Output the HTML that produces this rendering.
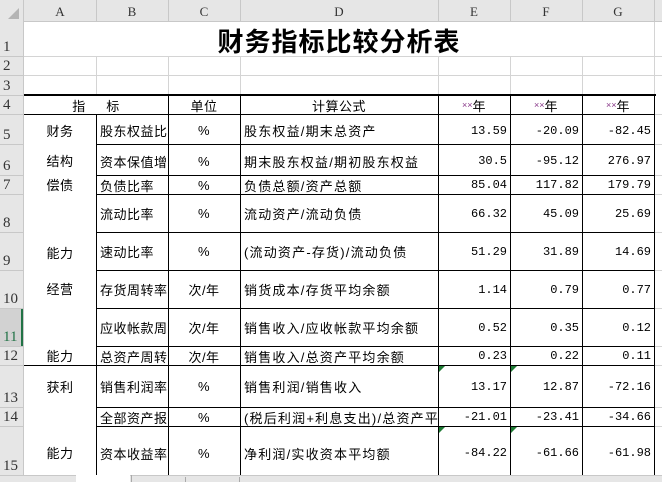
<!DOCTYPE html><html><head><meta charset="utf-8"><style>
body{margin:0;width:662px;height:482px;overflow:hidden;background:#fff;position:relative;font-family:"Liberation Sans","Noto Sans CJK SC",sans-serif;}
.a{position:absolute}
.h{position:absolute;background:#d4d4d4}
.k{position:absolute;background:#000}
.t{position:absolute;font-size:13px;letter-spacing:0.5px;color:#000;white-space:nowrap;overflow:hidden;display:flex;align-items:center}
.c{justify-content:center}
.n{justify-content:flex-end;font-family:"Liberation Mono",monospace;font-size:12px;letter-spacing:0;padding-right:3px;box-sizing:border-box}
.l{padding-left:3px;box-sizing:border-box}
.d{letter-spacing:1.2px}
.ch{position:absolute;top:0;height:22px;line-height:24px;text-align:center;font-family:"Liberation Serif",serif;font-size:13px;color:#333}
.rh{position:absolute;left:0;width:23px;font-family:"Liberation Serif",serif;font-size:15px;color:#333;padding-left:3px;box-sizing:border-box;display:flex;align-items:flex-end}
.g{position:absolute;width:0;height:0;border-top:6px solid #1e7b34;border-right:6px solid transparent}
.x{color:#8a3a8a;font-size:9px;letter-spacing:0}
</style></head><body>
<div class="a" style="left:0;top:0;width:662px;height:22px;background:#e6e6e6;border-bottom:1px solid #c8c8c8;box-sizing:border-box"></div>
<div class="a" style="left:0;top:0;width:24px;height:475px;background:#e6e6e6;border-right:1px solid #c8c8c8;box-sizing:border-box"></div>
<div class="a" style="left:8px;top:8px;width:0;height:0;border-bottom:11px solid #b4b4b4;border-left:11px solid transparent"></div>
<div class="ch" style="left:24px;width:72px">A</div><div class="ch" style="left:96px;width:72px">B</div><div class="ch" style="left:168px;width:72px">C</div><div class="ch" style="left:240px;width:198px">D</div><div class="ch" style="left:438px;width:72px">E</div><div class="ch" style="left:510px;width:72px">F</div><div class="ch" style="left:582px;width:72px">G</div>
<div class="h" style="left:96px;top:0;width:1px;height:22px;background:#c8c8c8"></div><div class="h" style="left:168px;top:0;width:1px;height:22px;background:#c8c8c8"></div><div class="h" style="left:240px;top:0;width:1px;height:22px;background:#c8c8c8"></div><div class="h" style="left:438px;top:0;width:1px;height:22px;background:#c8c8c8"></div><div class="h" style="left:510px;top:0;width:1px;height:22px;background:#c8c8c8"></div><div class="h" style="left:582px;top:0;width:1px;height:22px;background:#c8c8c8"></div><div class="h" style="left:654px;top:0;width:1px;height:22px;background:#c8c8c8"></div>
<div class="rh" style="top:22px;height:34px">1</div><div class="rh" style="top:56px;height:19px">2</div><div class="rh" style="top:75px;height:20px">3</div><div class="rh" style="top:95px;height:19px">4</div><div class="rh" style="top:114px;height:30px">5</div><div class="rh" style="top:144px;height:31px">6</div><div class="rh" style="top:175px;height:19px">7</div><div class="rh" style="top:194px;height:38px">8</div><div class="rh" style="top:232px;height:38px">9</div><div class="rh" style="top:270px;height:38px">10</div>
<div class="rh" style="top:308px;height:38px;background:#d2d2d2;color:#217346;border-right:2px solid #217346">11</div>
<div class="rh" style="top:346px;height:19px">12</div><div class="rh" style="top:365px;height:42px">13</div><div class="rh" style="top:407px;height:19px">14</div><div class="rh" style="top:426px;height:49px">15</div>
<div class="h" style="left:0;top:56px;width:24px;height:1px;background:#c8c8c8"></div><div class="h" style="left:0;top:75px;width:24px;height:1px;background:#c8c8c8"></div><div class="h" style="left:0;top:95px;width:24px;height:1px;background:#c8c8c8"></div><div class="h" style="left:0;top:114px;width:24px;height:1px;background:#c8c8c8"></div><div class="h" style="left:0;top:144px;width:24px;height:1px;background:#c8c8c8"></div><div class="h" style="left:0;top:175px;width:24px;height:1px;background:#c8c8c8"></div><div class="h" style="left:0;top:194px;width:24px;height:1px;background:#c8c8c8"></div><div class="h" style="left:0;top:232px;width:24px;height:1px;background:#c8c8c8"></div><div class="h" style="left:0;top:270px;width:24px;height:1px;background:#c8c8c8"></div><div class="h" style="left:0;top:308px;width:24px;height:1px;background:#c8c8c8"></div><div class="h" style="left:0;top:346px;width:24px;height:1px;background:#c8c8c8"></div><div class="h" style="left:0;top:365px;width:24px;height:1px;background:#c8c8c8"></div><div class="h" style="left:0;top:407px;width:24px;height:1px;background:#c8c8c8"></div><div class="h" style="left:0;top:426px;width:24px;height:1px;background:#c8c8c8"></div>
<div class="h" style="left:24px;top:56px;width:638px;height:1px"></div><div class="h" style="left:24px;top:75px;width:638px;height:1px"></div>
<div class="h" style="left:96px;top:56px;width:1px;height:39px"></div><div class="h" style="left:168px;top:56px;width:1px;height:39px"></div><div class="h" style="left:240px;top:56px;width:1px;height:39px"></div><div class="h" style="left:438px;top:56px;width:1px;height:39px"></div><div class="h" style="left:510px;top:56px;width:1px;height:39px"></div><div class="h" style="left:582px;top:56px;width:1px;height:39px"></div><div class="h" style="left:654px;top:22px;width:1px;height:453px"></div>
<div class="h" style="left:655px;top:114px;width:7px;height:1px"></div><div class="h" style="left:655px;top:144px;width:7px;height:1px"></div><div class="h" style="left:655px;top:175px;width:7px;height:1px"></div><div class="h" style="left:655px;top:194px;width:7px;height:1px"></div><div class="h" style="left:655px;top:232px;width:7px;height:1px"></div><div class="h" style="left:655px;top:270px;width:7px;height:1px"></div><div class="h" style="left:655px;top:308px;width:7px;height:1px"></div><div class="h" style="left:655px;top:346px;width:7px;height:1px"></div><div class="h" style="left:655px;top:365px;width:7px;height:1px"></div><div class="h" style="left:655px;top:407px;width:7px;height:1px"></div><div class="h" style="left:655px;top:426px;width:7px;height:1px"></div>
<div class="k" style="left:24px;top:94px;width:632px;height:2px"></div>
<div class="k" style="left:24px;top:114px;width:631px;height:1px"></div>
<div class="k" style="left:96px;top:144px;width:559px;height:1px"></div><div class="k" style="left:96px;top:175px;width:559px;height:1px"></div><div class="k" style="left:96px;top:194px;width:559px;height:1px"></div><div class="k" style="left:96px;top:232px;width:559px;height:1px"></div><div class="k" style="left:96px;top:270px;width:559px;height:1px"></div><div class="k" style="left:96px;top:308px;width:559px;height:1px"></div><div class="k" style="left:96px;top:346px;width:559px;height:1px"></div><div class="k" style="left:24px;top:365px;width:631px;height:1px"></div><div class="k" style="left:96px;top:407px;width:559px;height:1px"></div><div class="k" style="left:96px;top:426px;width:559px;height:1px"></div>
<div class="k" style="left:96px;top:114px;width:1px;height:361px"></div><div class="k" style="left:168px;top:95px;width:1px;height:380px"></div><div class="k" style="left:240px;top:95px;width:1px;height:380px"></div><div class="k" style="left:438px;top:95px;width:1px;height:380px"></div><div class="k" style="left:510px;top:95px;width:1px;height:380px"></div><div class="k" style="left:582px;top:95px;width:1px;height:380px"></div><div class="k" style="left:654px;top:95px;width:1px;height:380px"></div>
<div class="t c" style="left:24px;top:22px;width:630px;height:36px;font-size:26px;font-weight:bold;letter-spacing:1px;font-family:'Noto Sans CJK SC',sans-serif">财务指标比较分析表</div>
<div class="t c" style="left:24px;top:96px;width:144px;height:18px">指&nbsp;&nbsp;&nbsp;&nbsp;&nbsp;标</div>
<div class="t c" style="left:168px;top:96px;width:72px;height:18px">单位</div>
<div class="t c" style="left:240px;top:96px;width:198px;height:18px">计算公式</div>
<div class="t c" style="left:438px;top:96px;width:72px;height:18px"><span class="x">××</span>年</div>
<div class="t c" style="left:510px;top:96px;width:72px;height:18px"><span class="x">××</span>年</div>
<div class="t c" style="left:582px;top:96px;width:72px;height:18px"><span class="x">××</span>年</div>
<div class="t c" style="left:24px;top:114px;width:72px;height:32px">财务</div>
<div class="t c" style="left:24px;top:144px;width:72px;height:33px">结构</div>
<div class="t c" style="left:24px;top:175px;width:72px;height:19px">偿债</div>
<div class="t c" style="left:24px;top:232px;width:72px;height:40px">能力</div>
<div class="t c" style="left:24px;top:270px;width:72px;height:36px">经营</div>
<div class="t c" style="left:24px;top:346px;width:72px;height:19px">能力</div>
<div class="t c" style="left:24px;top:365px;width:72px;height:42px">获利</div>
<div class="t c" style="left:24px;top:426px;width:72px;height:52px">能力</div>
<div class="t l" style="left:97px;top:115px;width:71px;height:31px">股东权益比</div><div class="t c" style="left:168px;top:115px;width:72px;height:31px">%</div><div class="t l d" style="left:241px;top:115px;width:197px;height:31px">股东权益/期末总资产</div><div class="t n" style="left:438px;top:115px;width:72px;height:31px">13.59</div><div class="t n" style="left:510px;top:115px;width:72px;height:31px">-20.09</div><div class="t n" style="left:582px;top:115px;width:72px;height:31px">-82.45</div>
<div class="t l" style="left:97px;top:145px;width:71px;height:32px">资本保值增</div><div class="t c" style="left:168px;top:145px;width:72px;height:32px">%</div><div class="t l d" style="left:241px;top:145px;width:197px;height:32px">期末股东权益/期初股东权益</div><div class="t n" style="left:438px;top:145px;width:72px;height:32px">30.5</div><div class="t n" style="left:510px;top:145px;width:72px;height:32px">-95.12</div><div class="t n" style="left:582px;top:145px;width:72px;height:32px">276.97</div>
<div class="t l" style="left:97px;top:176px;width:71px;height:18px">负债比率</div><div class="t c" style="left:168px;top:176px;width:72px;height:18px">%</div><div class="t l d" style="left:241px;top:176px;width:197px;height:18px">负债总额/资产总额</div><div class="t n" style="left:438px;top:176px;width:72px;height:18px">85.04</div><div class="t n" style="left:510px;top:176px;width:72px;height:18px">117.82</div><div class="t n" style="left:582px;top:176px;width:72px;height:18px">179.79</div>
<div class="t l" style="left:97px;top:195px;width:71px;height:37px">流动比率</div><div class="t c" style="left:168px;top:195px;width:72px;height:37px">%</div><div class="t l d" style="left:241px;top:195px;width:197px;height:37px">流动资产/流动负债</div><div class="t n" style="left:438px;top:195px;width:72px;height:37px">66.32</div><div class="t n" style="left:510px;top:195px;width:72px;height:37px">45.09</div><div class="t n" style="left:582px;top:195px;width:72px;height:37px">25.69</div>
<div class="t l" style="left:97px;top:233px;width:71px;height:37px">速动比率</div><div class="t c" style="left:168px;top:233px;width:72px;height:37px">%</div><div class="t l d" style="left:241px;top:233px;width:197px;height:37px">(流动资产-存货)/流动负债</div><div class="t n" style="left:438px;top:233px;width:72px;height:37px">51.29</div><div class="t n" style="left:510px;top:233px;width:72px;height:37px">31.89</div><div class="t n" style="left:582px;top:233px;width:72px;height:37px">14.69</div>
<div class="t l" style="left:97px;top:271px;width:71px;height:37px">存货周转率</div><div class="t c" style="left:168px;top:271px;width:72px;height:37px">次/年</div><div class="t l d" style="left:241px;top:271px;width:197px;height:37px">销货成本/存货平均余额</div><div class="t n" style="left:438px;top:271px;width:72px;height:37px">1.14</div><div class="t n" style="left:510px;top:271px;width:72px;height:37px">0.79</div><div class="t n" style="left:582px;top:271px;width:72px;height:37px">0.77</div>
<div class="t l" style="left:97px;top:309px;width:71px;height:37px">应收帐款周</div><div class="t c" style="left:168px;top:309px;width:72px;height:37px">次/年</div><div class="t l d" style="left:241px;top:309px;width:197px;height:37px">销售收入/应收帐款平均余额</div><div class="t n" style="left:438px;top:309px;width:72px;height:37px">0.52</div><div class="t n" style="left:510px;top:309px;width:72px;height:37px">0.35</div><div class="t n" style="left:582px;top:309px;width:72px;height:37px">0.12</div>
<div class="t l" style="left:97px;top:347px;width:71px;height:18px">总资产周转</div><div class="t c" style="left:168px;top:347px;width:72px;height:18px">次/年</div><div class="t l d" style="left:241px;top:347px;width:197px;height:18px">销售收入/总资产平均余额</div><div class="t n" style="left:438px;top:347px;width:72px;height:18px">0.23</div><div class="t n" style="left:510px;top:347px;width:72px;height:18px">0.22</div><div class="t n" style="left:582px;top:347px;width:72px;height:18px">0.11</div>
<div class="t l" style="left:97px;top:366px;width:71px;height:41px">销售利润率</div><div class="t c" style="left:168px;top:366px;width:72px;height:41px">%</div><div class="t l d" style="left:241px;top:366px;width:197px;height:41px">销售利润/销售收入</div><div class="t n" style="left:438px;top:366px;width:72px;height:41px">13.17</div><div class="t n" style="left:510px;top:366px;width:72px;height:41px">12.87</div><div class="t n" style="left:582px;top:366px;width:72px;height:41px">-72.16</div>
<div class="t l" style="left:97px;top:408px;width:71px;height:18px">全部资产报</div><div class="t c" style="left:168px;top:408px;width:72px;height:18px">%</div><div class="t l d" style="left:241px;top:408px;width:197px;height:18px">(税后利润+利息支出)/总资产平均</div><div class="t n" style="left:438px;top:408px;width:72px;height:18px">-21.01</div><div class="t n" style="left:510px;top:408px;width:72px;height:18px">-23.41</div><div class="t n" style="left:582px;top:408px;width:72px;height:18px">-34.66</div>
<div class="t l" style="left:97px;top:427px;width:71px;height:52px">资本收益率</div><div class="t c" style="left:168px;top:427px;width:72px;height:52px">%</div><div class="t l d" style="left:241px;top:427px;width:197px;height:52px">净利润/实收资本平均额</div><div class="t n" style="left:438px;top:427px;width:72px;height:52px">-84.22</div><div class="t n" style="left:510px;top:427px;width:72px;height:52px">-61.66</div><div class="t n" style="left:582px;top:427px;width:72px;height:52px">-61.98</div>
<div class="g" style="left:439px;top:366px"></div><div class="g" style="left:511px;top:366px"></div><div class="g" style="left:439px;top:427px"></div><div class="g" style="left:511px;top:427px"></div>
<div class="a" style="left:0;top:475px;width:662px;height:7px;background:#e6e6e6;border-top:1px solid #c8c8c8;box-sizing:border-box"></div>
<div class="a" style="left:76px;top:475px;width:54px;height:7px;background:#fff"></div>
<div class="a" style="left:131px;top:475px;width:1px;height:7px;background:#aaa"></div>
<div class="a" style="left:185px;top:477px;width:1px;height:5px;background:#aaa"></div>
<div class="a" style="left:239px;top:477px;width:1px;height:5px;background:#aaa"></div>
</body></html>
